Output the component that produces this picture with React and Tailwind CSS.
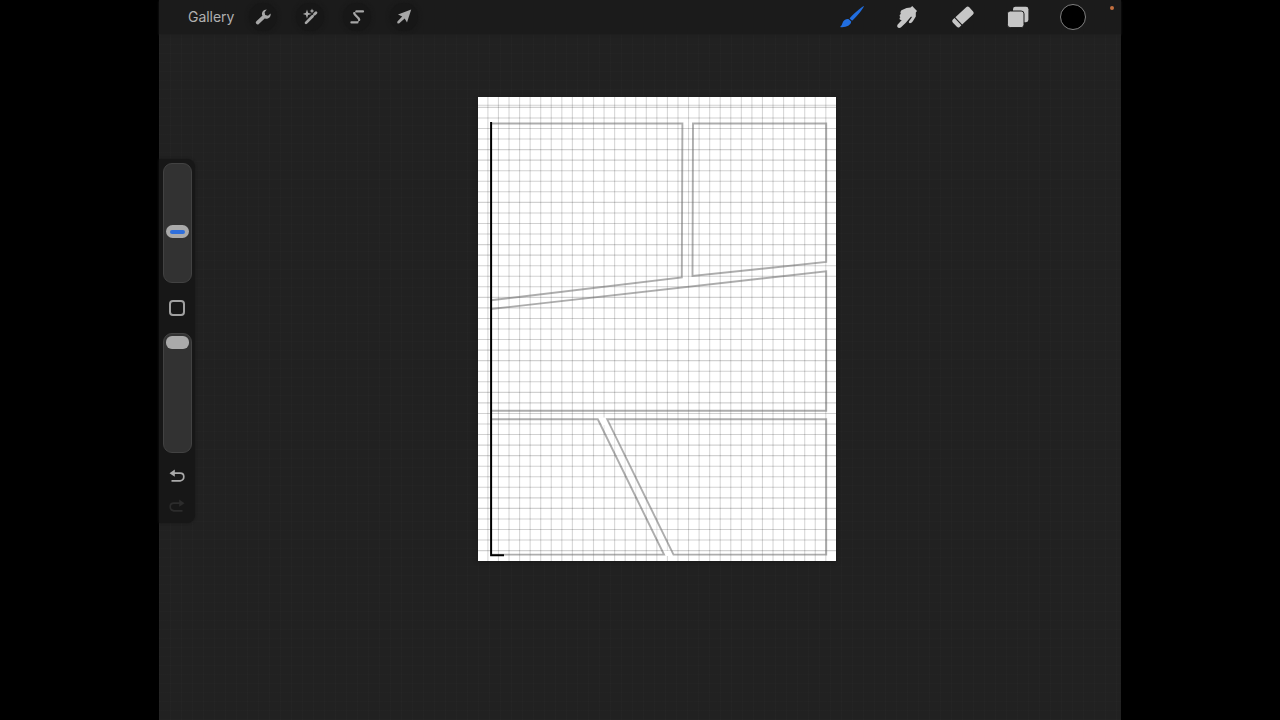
const cols = Array.from({ length: 33 }, (_, i) => 9.9 + i * 10.56);
const rows = [8.2, ...Array.from({ length: 43 }, (_, i) => 10.4 + i * 10.553)];

function Wrench() {
  return (
    <svg viewBox="0 0 24 24" className="size-6" fill="#a6a6a6" stroke="#a6a6a6">
      <path d="M6.6 17.6 L13 11.6" strokeWidth="3.6" strokeLinecap="round" />
      <path stroke="none" d="M15.8 4.6 C12.3 4.6 10.5 7.4 11.1 10 L14.1 13.5 C17.3 14.4 20.2 11.8 19.6 8.4 L17 10.8 L14.2 10 L13.6 7.2Z" />
    </svg>
  );
}

function Wand() {
  return (
    <svg viewBox="0 0 24 24" className="size-6" fill="#a6a6a6" stroke="#a6a6a6">
      <path d="M8 17.9 L14.6 11.2 M16.4 9.3 L18 7.7" strokeWidth="2.7" strokeLinecap="round" />
      <path stroke="none" d="M9 4.4 L10.1 7.8 L13.6 8.9 L10.1 10 L9 13.4 L7.9 10 L4.8 8.9 L7.9 7.8Z M14 3.6 L14.7 5.3 L16.4 6 L14.7 6.7 L14 8.4 L13.3 6.7 L11.6 6 L13.3 5.3Z" />
    </svg>
  );
}

function Selection() {
  return (
    <svg viewBox="0 0 24 24" className="size-6" fill="none" stroke="#a6a6a6" strokeLinecap="round">
      <path d="M11.4 6.4 H18" strokeWidth="2.2" />
      <path d="M6.4 17.4 H12.4" strokeWidth="2.2" />
      <path d="M9.2 8.2 C9.4 10.6 13.8 11.6 14.2 14.8" strokeWidth="2.2" />
      <path d="M9.1 8.3 L10.8 6.6 M14.3 15 L12.8 17" strokeWidth="1" />
    </svg>
  );
}

function Arrow() {
  return (
    <svg viewBox="0 0 24 24" className="size-6" fill="#a6a6a6">
      <path d="M19.2 4.6 L15 17.4 L12.7 13.6 L7 18.6 L5.2 18.2 L5.4 16.6 L10.2 11.4 L6 9.6Z" />
    </svg>
  );
}

function Tool({ children }) {
  return <div className="flex size-7 items-center justify-center rounded-full bg-[#171717] shadow-[0_0_4px_#171717]">{children}</div>;
}

function Brush() {
  return (
    <svg viewBox="0 0 28 28" className="size-7" fill="#216ee0">
      <path d="M26 3 C24 3.5 13 13 11.6 15.4 L14.1 17.8 C17 15.5 25.5 5.5 26 3Z" />
      <path d="M10.8 16.2 L13.2 18.6 C13 22.8 7 24.8 2 24 C4.2 22.6 4 20.7 5.2 18.5 C6.5 16.2 9 15.5 10.8 16.2Z" />
    </svg>
  );
}

function Smudge() {
  return (
    <svg viewBox="0 0 28 28" className="size-7" fill="#c6c6c6">
      <path d="M9.6 6.8 Q13.5 4.4 17.6 4.4 L19.2 3 L24 8 L22.8 9.6 L22.8 13.5 L20 18 C18 21 15.4 20.5 15.9 18.5 L18.9 14.2 L18.1 13.6 L12.8 19.7 L7.8 24.6 C5.8 26 3.2 24.2 4.5 21.8 L8.8 17 C6.3 17 6 15 7.4 14.2 C6 12.9 6.6 11.3 7.9 10.9 C6.8 9.4 8 7.2 9.6 6.8Z" />
    </svg>
  );
}

function Eraser() {
  return (
    <svg viewBox="0 0 28 28" className="size-7" fill="#c6c6c6">
      <g transform="rotate(-43 14 14)">
        <path d="M8.2 9 H23 Q25.2 9 25.2 11.2 V16.8 Q25.2 19 23 19 H8.2Z" />
        <path d="M7.1 9 V19 H4.8 Q2.8 19 2.8 17 V11 Q2.8 9 4.8 9Z" />
      </g>
    </svg>
  );
}

function Layers() {
  return (
    <svg viewBox="0 0 28 28" className="size-7" fill="#c6c6c6">
      <rect x="9" y="3.8" width="15.4" height="15.4" rx="2.4" />
      <rect x="3.4" y="8" width="16.6" height="16.6" rx="2.8" stroke="#1b1b1b" strokeWidth="1" />
    </svg>
  );
}

function Canvas() {
  return (
    <svg viewBox="0 0 358 464" className="block h-[464px] w-[358px] bg-white" fill="none">
      <g stroke="#000" strokeWidth="1.1">
        <g strokeOpacity=".16">{cols.map((x) => <path key={x} d={`M${x} 0V464`} />)}</g>
        <g strokeOpacity=".18">{rows.map((y) => <path key={y} d={`M0 ${y}H358`} />)}</g>
      </g>
      <path d="M120.5 321H128.5L195 456.5H186.5Z" fill="#fff" fillOpacity=".4" />
      <path d="M121 320.5H128L131 328H124Z M186 454H194V459H188Z" fill="#fff" />
      <g stroke="#686868" strokeOpacity=".54" strokeWidth="1.9">
        <path d="M13 26.5H204.4L203.8 180.4L13 203.2" />
        <path d="M215 26.5H348.2V165L214.5 179Z" />
        <path d="M13 212L348.2 174.3V313.8H13" />
        <path d="M13 322.3H119.8L186 457.6H13" />
        <path d="M129.2 322.3H348.2V457.6H195.5Z" />
      </g>
      <path d="M13.1 25V458.2H26" stroke="#000" strokeWidth="2" />
    </svg>
  );
}

function Undo({ redo = false }) {
  return (
    <svg viewBox="0 0 18 18" className={redo ? "size-[18px] -scale-x-100 text-[#2c2c2c]" : "size-[18px] text-[#aaa]"} fill="none" stroke="currentColor" strokeWidth="1.7">
      <path d="M4 6.2H12.1Q15.8 6.2 15.8 9.7T12.1 13.8H3.5" />
      <path d="M6.8 2.6V9.8L1.5 6.2Z" fill="currentColor" stroke="none" />
    </svg>
  );
}

export default function App() {
  return (
    <div className="flex h-screen w-full justify-center overflow-hidden bg-black font-['Inter',sans-serif]">
      <div className="flex h-[720px] w-[962px] flex-col bg-[#212121] bg-[repeating-linear-gradient(90deg,#ffffff03_0_1px,transparent_1px_11px),repeating-linear-gradient(0deg,#ffffff02_0_1px,transparent_1px_9px)]">
        <header className="flex h-[34px] shrink-0 items-center justify-between bg-[#1b1b1b] pl-[29px] shadow-[0_1px_2px_#1e1e1e]">
          <div className="flex items-center">
            <span className="w-[61px] text-[14px] leading-none tracking-[-0.05px] text-[#b0b0b0]">Gallery</span>
            <nav className="flex gap-[19px]">
              <Tool><Wrench /></Tool>
              <Tool><Wand /></Tool>
              <Tool><Selection /></Tool>
              <Tool><Arrow /></Tool>
            </nav>
          </div>
          <div className="flex items-center">
            <nav className="mr-[28px] flex items-center gap-[27.5px]">
              <Brush />
              <Smudge />
              <Eraser />
              <Layers />
            </nav>
            <div className="mr-[24px] size-[26px] rounded-full border border-[#808080] bg-black" />
            <div className="mr-[7px] mb-[18px] size-1 rounded-full bg-[#c4703f]" />
          </div>
        </header>
        <main className="flex flex-1 items-start">
          <aside className="mt-[125px] flex h-[364px] w-[36px] flex-col items-center rounded-r-lg bg-[#171717] pt-1 shadow-[0_0_3px_#171717]">
            <div className="flex h-[120px] w-[29px] shrink-0 flex-col items-center rounded-[9px] border border-[#424242] bg-[#323232] pt-[61px]">
              <div className="flex h-[13px] w-[23px] items-center justify-center rounded-full bg-[#aaa]">
                <div className="h-[4px] w-[15px] rounded-full bg-[#2f6fdc]" />
              </div>
            </div>
            <div className="mt-[16.5px] size-4 shrink-0 rounded-[4px] border-2 border-[#a0a0a0]" />
            <div className="mt-[17.5px] flex h-[120px] w-[29px] shrink-0 flex-col items-center rounded-[9px] border border-[#424242] bg-[#323232] pt-[2px]">
              <div className="h-[13px] w-[23px] rounded-[6px] bg-[#aaa]" />
            </div>
            <div className="mt-[14px] flex flex-col gap-[12px]">
              <Undo />
              <Undo redo />
            </div>
          </aside>
          <div className="mt-[63px] ml-[283px] shadow-[0_1px_4px_#191919]">
            <Canvas />
          </div>
        </main>
      </div>
    </div>
  );
}
